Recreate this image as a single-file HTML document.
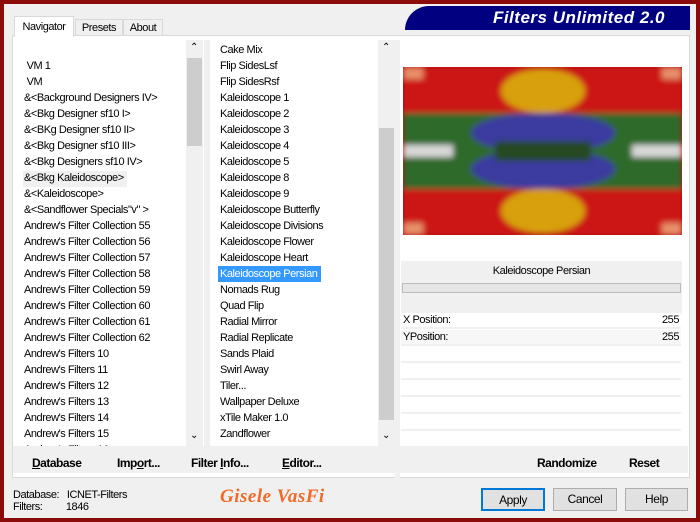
<!DOCTYPE html>
<html><head><meta charset="utf-8"><style>
*{margin:0;padding:0;box-sizing:border-box}
body{width:700px;height:522px;background:#8b0a0a;position:relative;overflow:hidden;font-family:"Liberation Sans",sans-serif;font-size:11px;color:#000;letter-spacing:-0.45px}
.win{position:absolute;left:4px;top:4px;width:692px;height:514px;background:#f0f0f0}
.a{position:absolute}
.list div{height:16px;line-height:16px;white-space:nowrap}
.btn{position:absolute;height:23px;border:1px solid #adadad;background:#e1e1e1;text-align:center;line-height:21px;font-size:12px}
.bb{font-weight:bold;font-size:12px;position:absolute;top:456px;letter-spacing:-0.5px}
.row{position:absolute;left:401px;width:280px;height:16px;border-bottom:2px solid #f0f0f0;background:#fff}
</style></head><body>
<div class="win"></div>
<div class="a" style="left:12px;top:35px;width:678px;height:443px;background:#fff;border:1px solid #d9d9d9"></div>
<div class="a" style="left:14px;top:16px;width:60px;height:21px;background:#fff;border:1px solid #d9d9d9;border-bottom:none;text-align:center;line-height:20px">Navigator</div>
<div class="a" style="left:75px;top:19px;width:48px;height:17px;background:#f0f0f0;border:1px solid #d9d9d9;text-align:center;line-height:16px">Presets</div>
<div class="a" style="left:123px;top:19px;width:40px;height:17px;background:#f0f0f0;border:1px solid #d9d9d9;text-align:center;line-height:16px">About</div>
<div class="a" style="left:405px;top:6px;width:285px;height:24px;background:#000080;border-radius:24px 0 0 0;color:#fff;font-style:italic;font-weight:bold;font-size:17px;line-height:24px;text-align:right;padding-right:25px;letter-spacing:0.5px">Filters Unlimited 2.0</div>
<div class="a" style="left:186px;top:40px;width:17px;height:406px;background:#f0f0f0"></div>
<div class="a" style="left:187px;top:58px;width:15px;height:88px;background:#cdcdcd"></div>
<div class="a" style="left:190px;top:42px;font-size:10px">&#8963;</div>
<div class="a" style="left:190px;top:430px;font-size:10px">&#8964;</div>
<div class="a" style="left:23px;top:171px;width:104px;height:16px;background:#f0f0f0"></div>
<div class="a list" style="left:24px;top:58px;width:160px;height:388px;overflow:hidden">
<div>&nbsp;VM 1</div><div>&nbsp;VM</div><div>&amp;&lt;Background Designers IV&gt;</div><div>&amp;&lt;Bkg Designer sf10 I&gt;</div><div>&amp;&lt;BKg Designer sf10 II&gt;</div><div>&amp;&lt;Bkg Designer sf10 III&gt;</div><div>&amp;&lt;Bkg Designers sf10 IV&gt;</div><div>&amp;&lt;Bkg Kaleidoscope&gt;</div><div>&amp;&lt;Kaleidoscope&gt;</div><div>&amp;&lt;Sandflower Specials"v" &gt;</div><div>Andrew's Filter Collection 55</div><div>Andrew's Filter Collection 56</div><div>Andrew's Filter Collection 57</div><div>Andrew's Filter Collection 58</div><div>Andrew's Filter Collection 59</div><div>Andrew's Filter Collection 60</div><div>Andrew's Filter Collection 61</div><div>Andrew's Filter Collection 62</div><div>Andrew's Filters 10</div><div>Andrew's Filters 11</div><div>Andrew's Filters 12</div><div>Andrew's Filters 13</div><div>Andrew's Filters 14</div><div>Andrew's Filters 15</div><div>Andrew's Filters 16</div>
</div>
<div class="a" style="left:204px;top:40px;width:6px;height:406px;background:#f0f0f0"></div>
<div class="a" style="left:378px;top:40px;width:17px;height:406px;background:#f0f0f0"></div>
<div class="a" style="left:379px;top:128px;width:15px;height:292px;background:#cdcdcd"></div>
<div class="a" style="left:382px;top:42px;font-size:10px">&#8963;</div>
<div class="a" style="left:382px;top:430px;font-size:10px">&#8964;</div>
<div class="a" style="left:218px;top:266px;width:103px;height:16px;background:#3399ff"></div>
<div class="a list" style="left:220px;top:42px;width:156px;height:404px;overflow:hidden">
<div>Cake Mix</div><div>Flip SidesLsf</div><div>Flip SidesRsf</div><div>Kaleidoscope 1</div><div>Kaleidoscope 2</div><div>Kaleidoscope 3</div><div>Kaleidoscope 4</div><div>Kaleidoscope 5</div><div>Kaleidoscope 8</div><div>Kaleidoscope 9</div><div>Kaleidoscope Butterfly</div><div>Kaleidoscope Divisions</div><div>Kaleidoscope Flower</div><div>Kaleidoscope Heart</div><div style="color:#fff">Kaleidoscope Persian</div><div>Nomads Rug</div><div>Quad Flip</div><div>Radial Mirror</div><div>Radial Replicate</div><div>Sands Plaid</div><div>Swirl Away</div><div>Tiler...</div><div>Wallpaper Deluxe</div><div>xTile Maker 1.0</div><div>Zandflower</div>
</div>
<div class="a" style="left:395px;top:40px;width:5px;height:438px;background:#f0f0f0"></div>
<svg class="a" style="left:403px;top:67px" width="279" height="168" viewBox="0 0 279 168">
<defs><filter id="b"><feGaussianBlur stdDeviation="3"/></filter></defs>
<rect width="279" height="168" fill="#b01010"/>
<g filter="url(#b)">
<rect y="0" width="279" height="48" fill="#cc1414"/>
<rect y="120" width="279" height="48" fill="#cc1414"/>
<ellipse cx="140" cy="24" rx="42" ry="22" fill="#d8a010"/>
<ellipse cx="140" cy="144" rx="42" ry="22" fill="#d8a010"/>
<rect y="46" width="279" height="76" fill="#2f6a2a"/>
<ellipse cx="140" cy="66" rx="72" ry="20" fill="#3b3aa0"/>
<ellipse cx="140" cy="102" rx="72" ry="20" fill="#3b3aa0"/>
<rect x="92" y="74" width="96" height="20" fill="#264a22"/>
<rect x="0" y="78" width="50" height="12" fill="#d8d8d8"/>
<rect x="229" y="78" width="50" height="12" fill="#d8d8d8"/>
<rect x="0" y="0" width="20" height="12" fill="#e8906a"/>
<rect x="259" y="0" width="20" height="12" fill="#e8906a"/>
<rect x="0" y="156" width="20" height="12" fill="#e8906a"/>
<rect x="259" y="156" width="20" height="12" fill="#e8906a"/>
</g>
</svg>
<div class="a" style="left:401px;top:261px;width:281px;height:54px;background:#f0f0f0"></div>
<div class="a" style="left:401px;top:265px;width:281px;text-align:center">Kaleidoscope Persian</div>
<div class="a" style="left:402px;top:283px;width:279px;height:10px;background:#e6e6e6;border:1px solid #bcbcbc"></div>
<div class="row" style="top:313px"><span style="position:absolute;left:2px;top:1px">X Position:</span><span style="position:absolute;right:2px;top:1px">255</span></div>
<div class="row" style="top:330px;background:#f7f7f7"><span style="position:absolute;left:2px;top:1px">YPosition:</span><span style="position:absolute;right:2px;top:1px">255</span></div>
<div class="row" style="top:347px"></div><div class="row" style="top:364px"></div><div class="row" style="top:381px"></div><div class="row" style="top:398px"></div><div class="row" style="top:415px"></div>
<div class="a" style="left:13px;top:446px;width:383px;height:27px;background:#f0f0f0"></div>
<div class="a" style="left:400px;top:446px;width:288px;height:27px;background:#f0f0f0"></div>
<div class="bb" style="left:32px"><u>D</u>atabase</div>
<div class="bb" style="left:117px">Imp<u>o</u>rt...</div>
<div class="bb" style="left:191px">Filter <u>I</u>nfo...</div>
<div class="bb" style="left:282px"><u>E</u>ditor...</div>
<div class="bb" style="left:537px">Randomize</div>
<div class="bb" style="left:629px">Reset</div>
<div class="a" style="left:13px;top:489px;line-height:12px">Database:&nbsp;&nbsp; ICNET-Filters<br>Filters:&nbsp;&nbsp;&nbsp;&nbsp;&nbsp;&nbsp;&nbsp;&nbsp; 1846</div>
<div class="a" style="left:220px;top:486px;color:#f06a2a;font-family:'Liberation Serif',serif;font-style:italic;font-weight:bold;font-size:19px;letter-spacing:0.5px">Gisele VasFi</div>
<div class="btn" style="left:481px;top:488px;width:64px;border:2px solid #0078d7">Apply</div>
<div class="btn" style="left:553px;top:488px;width:64px">Cancel</div>
<div class="btn" style="left:625px;top:488px;width:63px">Help</div>
</body></html>
